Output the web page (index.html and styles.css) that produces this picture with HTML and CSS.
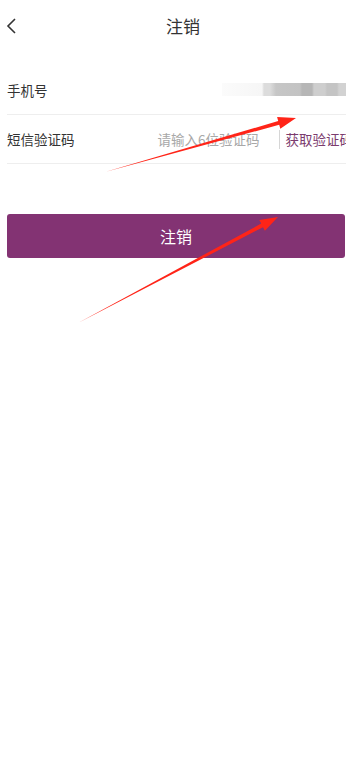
FILE: index.html
```html
<!DOCTYPE html>
<html lang="zh">
<head>
    <meta charset="UTF-8">
    <meta name="viewport" content="width=device-width, initial-scale=1.0">
    <title>注销</title>
    <link rel="stylesheet" href="styles.css">
</head>
<body>
    <div class="page">
        <div class="nav">
            <span class="back">
                <svg width="12" height="18" viewBox="0 0 12 18"><polyline points="9,2 2,9 9,16" fill="none" stroke="#333" stroke-width="1.6"/></svg>
            </span>
            <h1 class="title">注销</h1>
        </div>

        <div class="form">
            <div class="row">
                <span class="label">手机号</span>
                <span class="phone"></span>
            </div>
            <div class="row">
                <span class="label">短信验证码</span>
                <input type="text" class="code" placeholder="请输入6位验证码">
                <span class="sep"></span>
                <a class="get-code">获取验证码</a>
            </div>
        </div>

        <button class="submit">注销</button>

        <!-- 标注箭头 -->
        <svg class="marks" width="346" height="766" viewBox="0 0 346 766">
            <polygon fill="#ff2418" points="105,172 278.2,121.0 277.1,117.1 296,118 280.3,128.7 279.2,124.8"/>
            <polygon fill="#ff2418" points="78,323 261.2,223.6 259.3,220.1 278,217 264.9,230.7 263.0,227.2"/>
        </svg>
    </div>
</body>
</html>
```

FILE: styles.css
```css
body {
    margin: 0;
    background: #fff;
    font-family: "Noto Sans CJK SC", "Noto Sans", sans-serif;
    color: #333;
    overflow: hidden;
}
.page {
    position: relative;
    width: 346px;
    height: 766px;
    overflow: hidden;
}
.nav {
    height: 50px;
    display: flex;
    align-items: center;
    justify-content: center;
    position: relative;
}
.back {
    position: absolute;
    left: 6px;
    top: 17px;
    display: flex;
}
.title {
    margin: 0;
    font-size: 17px;
    font-weight: normal;
    color: #333;
    margin-left: 20px;
}
.form {
    margin-top: 16px;
    margin-left: 7px;
    width: 339px;
}
.row {
    height: 48px;
    display: flex;
    align-items: center;
    border-bottom: 1px solid #eeeeee;
    font-size: 13.5px;
    white-space: nowrap;
}
.label {
    flex: 1;
    color: #333;
}
.phone {
    width: 124px;
    height: 13px;
    margin-top: -1px;
    background: linear-gradient(90deg, #fbfbfb 0, #f6f6f6 40px, #dcdcdc 42px, #dcdcdc 48px, #c6c6c6 54px, #c3c3c3 78px, #b6b6b6 80px, #b6b6b6 90px, #cecece 92px, #cecece 103px, #c4c4c4 105px, #c4c4c4 115px, #d2d2d2 117px);
}
.code {
    width: 124px;
    border: none;
    outline: none;
    padding: 0 19px 0 0;
    font-family: inherit;
    font-size: 13.5px;
    color: #333;
    text-align: right;
    background: transparent;
}
.code::placeholder {
    color: #a8a8a8;
}
.sep {
    width: 1px;
    height: 19px;
    background: #d6d6d6;
    flex-shrink: 0;
}
.get-code {
    flex-shrink: 0;
    margin-left: 6px;
    margin-right: -7px;
    color: #7b3b6e;
    font-size: 13.5px;
}
.submit {
    display: block;
    margin: 50px 0 0 7px;
    width: 338px;
    height: 44px;
    border: none;
    border-radius: 3px;
    background: #833373;
    color: #fff;
    font-family: inherit;
    font-size: 16px;
}
.marks {
    position: absolute;
    left: 0;
    top: 0;
    pointer-events: none;
}
```
